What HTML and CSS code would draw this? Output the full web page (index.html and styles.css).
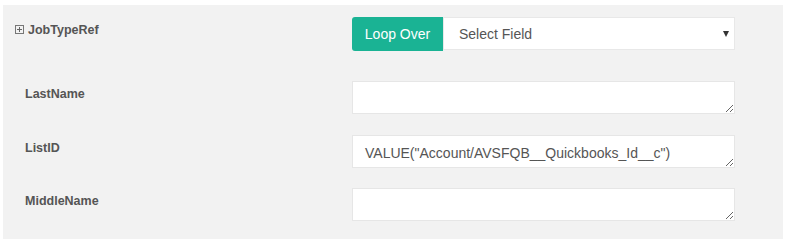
FILE: index.html
```html
<!DOCTYPE html>
<html lang="en">
<head>
    <meta charset="UTF-8">
    <title>Field Mapping</title>
    <link rel="stylesheet" href="styles.css">
</head>
<body>
    <div class="mapping-panel">
        <div class="mapping-row first-row">
            <div class="field-label">
                <svg class="expand-icon" width="9" height="9" viewBox="0 0 9 9">
                    <rect x="0.5" y="0.5" width="8" height="8" fill="none" stroke="#777" stroke-width="1"/>
                    <path d="M2 4.5h5M4.5 2v5" stroke="#666" stroke-width="1"/>
                </svg>
                <span>JobTypeRef</span>
            </div>
            <div class="field-input loop-group">
                <button class="loop-button">Loop Over</button>
                <div class="select-wrap">
                    <select class="field-select">
                        <option>Select Field</option>
                    </select>
                    <span class="select-arrow"></span>
                </div>
            </div>
        </div>

        <div class="mapping-row">
            <div class="field-label indent">LastName</div>
            <div class="field-input">
                <textarea class="value-box"></textarea>
            </div>
        </div>

        <div class="mapping-row">
            <div class="field-label indent">ListID</div>
            <div class="field-input">
                <textarea class="value-box">VALUE("Account/AVSFQB__Quickbooks_Id__c")</textarea>
            </div>
        </div>

        <div class="mapping-row">
            <div class="field-label indent">MiddleName</div>
            <div class="field-input">
                <textarea class="value-box"></textarea>
            </div>
        </div>
    </div>
</body>
</html>
```

FILE: styles.css
```css
body {
    margin: 0;
    background: #fff;
    font-family: 'Liberation Sans', Arial, sans-serif;
    overflow: hidden;
}
.mapping-panel {
    background: #f2f2f2;
    margin: 5px 0 0 3px;
    width: 780px;
    height: 234px;
    padding: 12px 0 0 12px;
    box-sizing: border-box;
}
.mapping-row {
    display: flex;
    margin-bottom: 20.5px;
}
.first-row {
    margin-bottom: 30px;
}
.field-label {
    width: 337px;
    flex-shrink: 0;
    font-size: 12.5px;
    font-weight: bold;
    color: #555;
    line-height: 14px;
    padding-top: 6px;
    display: flex;
    align-items: flex-start;
}
.field-label.indent {
    padding-left: 10px;
    box-sizing: border-box;
}
.expand-icon {
    margin: 2px 4px 0 0;
}
.field-input {
    width: 383px;
}
.loop-group {
    display: flex;
    height: 34px;
}
.loop-button {
    background: #1ab394;
    color: #fff;
    border: none;
    border-radius: 3px 0 0 3px;
    font-family: 'Liberation Sans', Arial, sans-serif;
    font-size: 14px;
    width: 91px;
    height: 34px;
    padding: 0;
}
.select-wrap {
    position: relative;
    flex: 1;
}
.field-select {
    appearance: none;
    -webkit-appearance: none;
    width: 100%;
    height: 33px;
    border: 1px solid #e8e8e8;
    background: #fff;
    border-radius: 0;
    font-family: 'Liberation Sans', Arial, sans-serif;
    font-size: 14px;
    color: #555;
    padding: 0 0 0 15px;
    outline: none;
}
.select-arrow {
    position: absolute;
    left: 280px;
    top: 14px;
    width: 0;
    height: 0;
    border-left: 3.5px solid transparent;
    border-right: 3.5px solid transparent;
    border-top: 6px solid #333;
}
.value-box {
    display: block;
    width: 383px;
    height: 33px;
    box-sizing: border-box;
    border: 1px solid #e6e6e6;
    background: #fff;
    padding: 9px 12px 0;
    font-family: 'Liberation Sans', Arial, sans-serif;
    font-size: 14px;
    line-height: 16px;
    color: #555;
    outline: none;
    overflow: hidden;
    margin: 0;
}
```
